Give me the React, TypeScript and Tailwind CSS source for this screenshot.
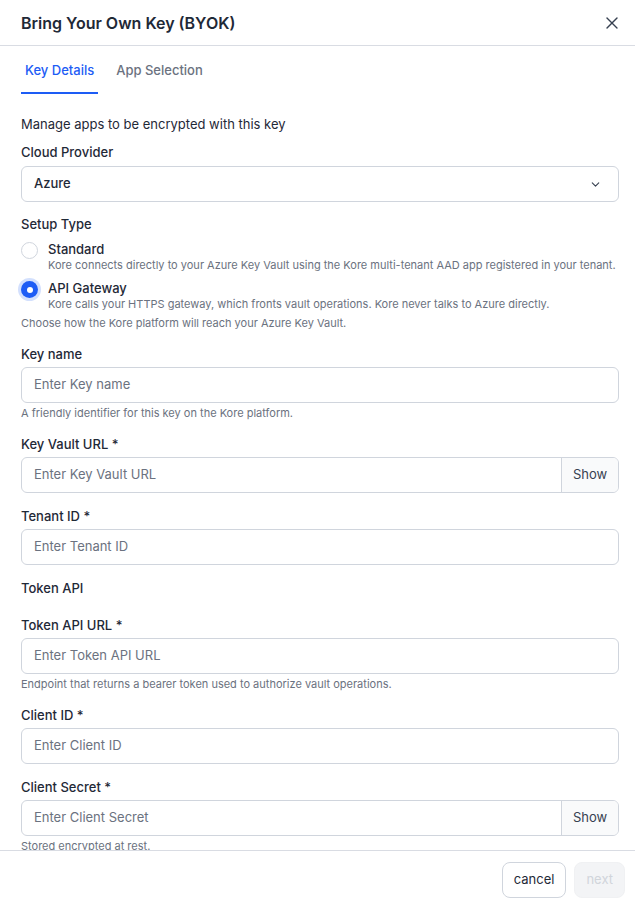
import { ChevronDown, X } from "lucide-react";

const font = { fontFamily: "Inter, 'Noto Sans', sans-serif" };

function Field({
  label,
  placeholder,
  hint,
  secret,
}: {
  label: string;
  placeholder: string;
  hint?: string;
  secret?: boolean;
}) {
  return (
    <div className="flex flex-col">
      <label className="mb-[3px] text-[13px] font-medium leading-5 text-[#1f2937]">{label}</label>
      <div className="flex h-9 overflow-hidden rounded-md border border-[#d0d5dd] bg-white">
        <input
          className="min-w-0 flex-1 px-3 text-[13px] text-[#1f2937] outline-none placeholder:text-[#6b7280]"
          placeholder={placeholder}
          type={secret ? "password" : "text"}
        />
        {secret && (
          <button className="w-[57px] border-l border-[#d0d5dd] bg-[#f9fafb] text-[13px] text-[#374151]">
            Show
          </button>
        )}
      </div>
      {hint && <p className="mt-[2px] text-[11px] leading-4 text-[#6b7280]">{hint}</p>}
    </div>
  );
}

function Radio({
  title,
  text,
  checked,
}: {
  title: string;
  text: string;
  checked?: boolean;
}) {
  return (
    <div className="flex gap-2.5">
      <div className="pt-[2px]">
        {checked ? (
          <span className="flex h-[17px] w-[17px] items-center justify-center rounded-full bg-[#1d5cf5] ring-[3px] ring-[#d3e0fd]">
            <span className="h-[6px] w-[6px] rounded-full bg-white" />
          </span>
        ) : (
          <span className="block h-[17px] w-[17px] rounded-full border border-[#d0d5dd] bg-white" />
        )}
      </div>
      <div className="flex flex-col">
        <span className="text-[13px] font-medium leading-[18px] text-[#1f2937]">{title}</span>
        <span className="text-[11px] leading-[14px] text-[#6b7280]">{text}</span>
      </div>
    </div>
  );
}

export default function App() {
  return (
    <div className="flex h-[906px] w-full flex-col bg-white" style={font}>
      <header className="flex h-[46px] shrink-0 items-center justify-between border-b border-[#d9dce3] pl-[21px] pr-[13px]">
        <h2 className="text-base font-semibold text-[#1f2937]">Bring Your Own Key (BYOK)</h2>
        <button className="text-[#374151]">
          <X size={20} strokeWidth={1.6} />
        </button>
      </header>

      <div className="flex-1 overflow-hidden pl-[21px] pr-[16px]">
        <nav className="flex gap-[18px] pt-[14px]">
          <span className="border-b-2 border-[#1d5cf5] px-1 pb-3 text-[13px] font-medium leading-5 text-[#1d5cf5]">
            Key Details
          </span>
          <span className="pb-3 text-[13px] font-medium leading-5 text-[#6b7280]">App Selection</span>
        </nav>

        <div className="flex flex-col gap-[13px] pt-5">
          <p className="-mb-[5px] text-[13px] leading-5 text-[#1f2937]">Manage apps to be encrypted with this key</p>

          <div className="-mb-px flex flex-col">
            <label className="mb-1 text-[13px] font-medium leading-5 text-[#1f2937]">Cloud Provider</label>
            <div className="flex h-9 items-center justify-between rounded-md border border-[#d0d5dd] px-3 text-[13px] font-medium text-[#1f2937]">
              <span>Azure</span>
              <ChevronDown size={13} className="mr-1 text-[#374151]" />
            </div>
          </div>

          <div className="flex flex-col">
            <span className="mb-[6px] text-[13px] font-medium leading-5 text-[#1f2937]">Setup Type</span>
            <div className="flex flex-col gap-[7px]">
              <Radio
                title="Standard"
                text="Kore connects directly to your Azure Key Vault using the Kore multi-tenant AAD app registered in your tenant."
              />
              <Radio
                checked
                title="API Gateway"
                text="Kore calls your HTTPS gateway, which fronts vault operations. Kore never talks to Azure directly."
              />
            </div>
            <p className="mt-1 text-[11px] leading-4 text-[#6b7280]">
              Choose how the Kore platform will reach your Azure Key Vault.
            </p>
          </div>

          <Field label="Key name" placeholder="Enter Key name" hint="A friendly identifier for this key on the Kore platform." />
          <Field label="Key Vault URL *" placeholder="Enter Key Vault URL" secret />
          <Field label="Tenant ID *" placeholder="Enter Tenant ID" />
          <p className="mb-[4px] text-[13px] font-medium leading-5 text-[#1f2937]">Token API</p>
          <Field
            label="Token API URL *"
            placeholder="Enter Token API URL"
            hint="Endpoint that returns a bearer token used to authorize vault operations."
          />
          <Field label="Client ID *" placeholder="Enter Client ID" />
          <Field label="Client Secret *" placeholder="Enter Client Secret" hint="Stored encrypted at rest." secret />
        </div>
      </div>

      <footer className="flex h-[56px] shrink-0 items-center justify-end gap-2 border-t border-[#d9dce3] pr-[10px] pt-[2px]">
        <button className="h-9 rounded-lg border border-[#d0d5dd] px-[11px] text-[13px] text-[#1f2937]">cancel</button>
        <button className="h-9 rounded-lg border border-[#f0f1f3] bg-[#f3f4f6] px-[11px] text-[13px] text-[#d1d5db]">
          next
        </button>
      </footer>
    </div>
  );
}
